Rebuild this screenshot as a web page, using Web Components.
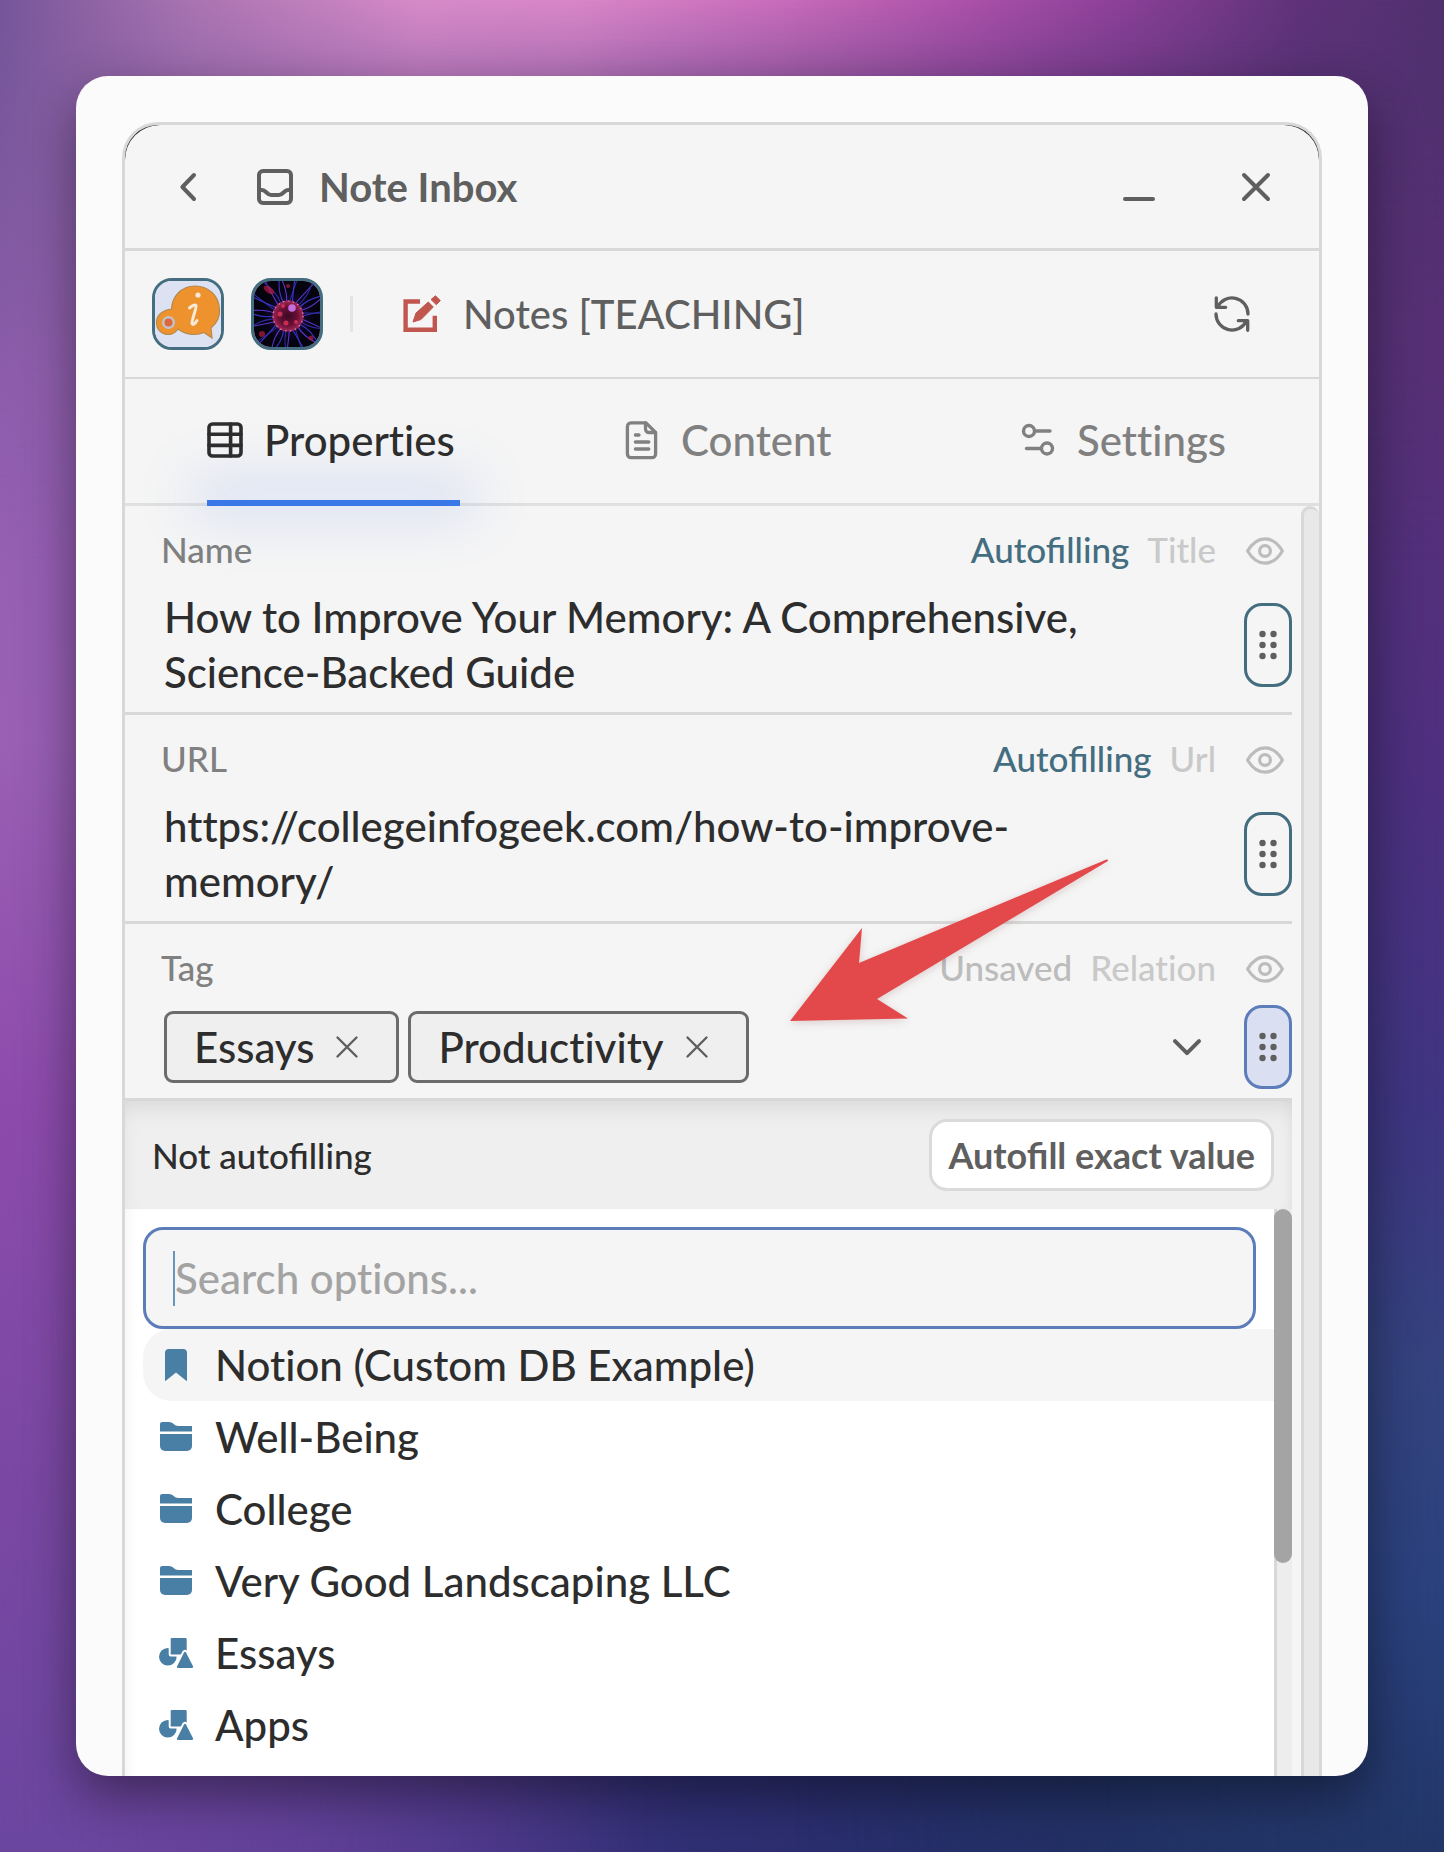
<!DOCTYPE html>
<html lang="en">
<head>
<meta charset="utf-8">
<title>Note Inbox</title>
<style>
  html, body { margin: 0; }
  body {
    font-family: Lato, "Liberation Sans", sans-serif;
    font-weight: 500;
    font-variant-ligatures: no-common-ligatures;
    --text-lg: 42px;
    --text-md: 40px;
    --text-sm: 35px;
    --ink: #2d2d2d;
    --ink-mid: #5f5f5f;
    --ink-soft: #808080;
    --ink-mute: #bcbcbc;
    --ink-faint: #c9c9c9;
    --surface: #f5f5f5;
    --line: #d8d8d8;
    --teal: #446d80;
    --blue: #5c7db9;
    --icon-blue: #4a7fa5;
    color: var(--ink);
  }
</style>
</head>
<body>
<desktop-backdrop>
  <note-window></note-window>
</desktop-backdrop>

<script>
const BASE = `
  :host, *, *::before, *::after { box-sizing: border-box; }
  button, input, textarea { font: inherit; font-variant-ligatures: inherit; color: inherit; background: none; border: 0; margin: 0; padding: 0; border-radius: 0; outline: 0; }
  button { cursor: pointer; display: flex; align-items: center; justify-content: center; }
`;

function define(name, css, html) {
  const template = document.createElement('template');
  template.innerHTML = `<style>${BASE}${css}</style>${html}`;
  customElements.define(name, class extends HTMLElement {
    constructor() {
      super();
      this.attachShadow({ mode: 'open' }).append(template.content.cloneNode(true));
    }
  });
}

/* ---------- icons ---------- */
const stroke = (w, body) => `<g fill="none" stroke="currentColor" stroke-width="${w}" stroke-linecap="round" stroke-linejoin="round">${body}</g>`;
const ICONS = {
  back: [16, 28, stroke(4, '<path d="M14 2 2.4 14 14 26"/>')],
  inbox: [36, 36, stroke(4, '<rect x="2" y="2" width="32" height="32" rx="4"/><path d="M2 21h3c4 0 5 5 9 5h8c4 0 5-5 9-5h3"/>')],
  minimize: [32, 28, stroke(4, '<path d="M2 26h28"/>')],
  close: [28, 28, stroke(4, '<path d="M2 2l24 24M26 2 2 26"/>')],
  edit: [38, 38, '<g stroke="currentColor" stroke-width="1" stroke-linejoin="round"><path fill="none" stroke-width="4.4" stroke-linejoin="miter" d="M17 6.5H2.6v28.3h29.2V20.7"/><path fill="currentColor" d="M10 27l3-9L25.3 7l5 5L18 24.5z"/><path fill="currentColor" d="M28 4.5 32.5.8l4.8 4.8-4 4.1z"/></g>'],
  refresh: [36, 36, stroke(3.3, '<path d="M2.3 1.8v9.5h9.4M3.6 11A16 16 0 0 1 34 18M33.7 34.3v-9.6h-9.4M32.4 25A16 16 0 0 1 2 18"/>')],
  table: [36, 36, stroke(3.6, '<rect x="2" y="2" width="32" height="32" rx="3.5"/><path d="M2 12.2h32M2 23.4h32M23.6 2v32"/>')],
  file: [36, 38, stroke(3.3, '<path d="M7 1.8h15l9.6 9.6V33a3.6 3.6 0 0 1-3.6 3.6H7A3.6 3.6 0 0 1 3.4 33V5.4A3.6 3.6 0 0 1 7 1.8z"/><path d="M21.5 2v6a3.5 3.5 0 0 0 3.5 3.5h6.5M11.4 14h3.6M11.4 21h13.4M11.4 28h13.4"/>')],
  sliders: [36, 34, stroke(3.4, '<circle cx="9" cy="8" r="5.5"/><path d="M15 8h15M6.5 25.5H21"/><circle cx="27" cy="25.5" r="5.5"/>')],
  eye: [38, 28, stroke(3.2, '<path d="M1.6 14C6.5 5.6 12 1.8 19 1.8S31.5 5.6 36.4 14C31.5 22.4 26 26.2 19 26.2S6.5 22.4 1.6 14z"/><circle cx="19" cy="14" r="5.4"/>')],
  dots: [18, 28, '<g fill="currentColor"><circle cx="3.5" cy="3" r="3.2"/><circle cx="14.5" cy="3" r="3.2"/><circle cx="3.5" cy="14" r="3.2"/><circle cx="14.5" cy="14" r="3.2"/><circle cx="3.5" cy="25" r="3.2"/><circle cx="14.5" cy="25" r="3.2"/></g>'],
  remove: [22, 22, stroke(2.4, '<path d="M1.5 1.5l19 19M20.5 1.5l-19 19"/>')],
  chevron: [28, 17, stroke(4, '<path d="M2 2.2l12 12 12-12"/>')],
  bookmark: [34, 32, '<path fill="currentColor" d="M10 0h14a4 4 0 0 1 4 4v27.5q0 .8-.8.3L17 23.6l-10.200 8.2q-.8.5-.8-.3V4a4 4 0 0 1 4-4z"/>'],
  folder: [34, 30, '<path fill="currentColor" d="M1 2a2 2 0 0 1 2-2h7c4.5 0 5 4 9.5 4H33v5.500H1z"/><path fill="currentColor" d="M1 12h32v12a5 5 0 0 1-5 5H6a5 5 0 0 1-5-5z"/>'],
  shapes: [34, 30, '<g fill="currentColor" stroke="#fff" stroke-width="4" paint-order="stroke" stroke-linejoin="round"><circle cx="8.8" cy="18.7" r="8.8" stroke="none"/><path d="M11.7 1a1 1 0 0 1 1-1h14a1 1 0 0 1 1 1v15.500h-16z"/><path d="M25 14.600q1-1.600 2 0L34 28.200q.7 1.800-1.200 1.800H19q-1.800 0-.9-1.800z"/></g>'],
  info: [66, 66, `<rect width="66" height="66" fill="#dde2f3"/>
    <g fill="#ee922d" stroke="#b4894f" stroke-width="1.2"><path d="M40 5C26 5 17 16 16.500 28 8 29 1.500 34 1.500 41.500S7 53.500 13.500 53.500c5 0 7-2 9.500-5.500 6 5 17 7.500 26 3.500L57 57l-1-10C62 42 65 36 64.500 28.500 64 15 54 5 40 5z"/></g>
    <circle cx="13.500" cy="41.500" r="6.500" fill="#bfc3cf"/><circle cx="13.500" cy="41.500" r="4" fill="#e0673a"/>
    <circle cx="43" cy="14" r="2.600" fill="#f7ead9"/>
    <path d="M34.500 27q5-4 6.500-2.500c1 1.500-4.500 15-4 18 .5 2 3 .5 5-3" fill="none" stroke="#f7ead9" stroke-width="3" stroke-linecap="round"/>`],
  plasma: [66, 66, null],
};

function plasma() {
  let rays = '';
  for (let i = 0; i < 30; i++) {
    const a = i * Math.PI / 15, b = a + (i % 2 ? .16 : -.14), m = a + (i % 3 ? .1 : -.12);
    const p = (r, t) => `${(34 + r * Math.cos(t)).toFixed(1)} ${(35 + r * Math.sin(t)).toFixed(1)}`;
    rays += `<path d="M${p(14, a)}Q${p(28, m)} ${p(47, b)}" stroke="${['#3b35c8', '#5a35d0', '#2e2a9a'][i % 3]}"/>`;
  }
  return `<radialGradient id="core"><stop offset="0" stop-color="#3a0a24"/><stop offset=".6" stop-color="#6a1034"/><stop offset="1" stop-color="#a02a5a"/></radialGradient>
    <radialGradient id="halo"><stop offset="0" stop-color="#6b2db8" stop-opacity=".6"/><stop offset="1" stop-color="#1a0a50" stop-opacity="0"/></radialGradient>
    <rect width="66" height="66" fill="#04030e"/><circle cx="34" cy="35" r="28" fill="url(#halo)"/>
    <g fill="none" stroke-width="1.1">${rays}</g>
    <g fill="#b81c44" opacity=".7"><ellipse cx="15" cy="9" rx="6" ry="3" transform="rotate(35 15 9)"/><circle cx="34" cy="5" r="2"/><circle cx="8" cy="53" r="3"/><circle cx="57" cy="57" r="2.500"/></g>
    <circle cx="34" cy="35" r="15.500" fill="url(#core)"/>
    <circle cx="34" cy="35" r="15" fill="none" stroke="#f07aa0" stroke-width="1.200" stroke-dasharray="1.500 3.500"/>
    <g fill="#c92d55"><circle cx="26" cy="33" r="2.500"/><circle cx="32" cy="42" r="2.500"/><circle cx="42" cy="41" r="2"/><circle cx="29" cy="25" r="2"/></g>
    <circle cx="38" cy="27" r="3.800" fill="#c46fe0"/>`;
}
ICONS.plasma[2] = plasma();

customElements.define('ui-icon', class extends HTMLElement {
  connectedCallback() {
    if (this.shadowRoot) return;
    const [w, h, body] = ICONS[this.getAttribute('name')];
    this.attachShadow({ mode: 'open' }).innerHTML =
      `<style>:host{display:block;flex:none;width:${w}px;height:${h}px}svg{display:block;overflow:visible}</style>
       <svg width="${w}" height="${h}" viewBox="0 0 ${w} ${h}" aria-hidden="true">${body}</svg>`;
  }
});

/* ---------- page ---------- */
define('desktop-backdrop', `
  :host {
    display: flex; height: 100vh; padding: 76px; overflow: hidden; position: relative; z-index: 0;
    background: linear-gradient(90deg, #6b469f 0%, #4b3788 28%, #2f2f74 48%, #222c62 76%, #223667 100%);
  }
  .glow { position: absolute; inset: 0; z-index: -1; }
  .left { background: linear-gradient(#7a5a9a 0%, #9460b0 20%, #9a60b4 40%, #8d4bab 60%, #7a48a2 80%, #6b469f 100%);
    mask-image: linear-gradient(90deg, #000 0, transparent 45%); }
  .right { background: linear-gradient(#50306f 0%, #5b3077 18%, #4f2f80 42%, #403582 60%, #34437f 74%, #2b417e 86%, #223667 100%);
    mask-image: linear-gradient(270deg, #000 0, transparent 45%); }
  .top { background: linear-gradient(90deg, #76559a 0%, #a873b0 13%, #d68ac8 29%, #d986c8 40%, #c86cba 54%, #a94fa8 68%, #8a4096 78%, #5f3279 90%, #50306f 100%);
    mask-image: linear-gradient(#000 0, #000a 90px, transparent 560px); }
  ::slotted(*) { flex: 1; min-width: 0; }
`, `<div class="glow left"></div><div class="glow right"></div><div class="glow top"></div><slot></slot>`);

define('note-window', `
  :host {
    display: flex; padding: 46px 46px 0; overflow: hidden; border-radius: 32px; background: #fbfbfb;
    box-shadow: 0 20px 50px rgba(0, 0, 0, .42);
  }
  .panel {
    flex: 1; min-width: 0; display: flex; flex-direction: column; overflow: hidden;
    border: 3px solid var(--line); border-bottom: 0; border-radius: 36px 36px 0 0; background: var(--surface);
  }
  window-header, database-bar, tab-bar, text-property, tag-property { flex: none; }
  .scroll { flex: 1; min-height: 0; display: flex; gap: 9px; }
  .fields { flex: 1; min-width: 0; display: flex; flex-direction: column; }
  .track { width: 18px; border-left: 3px solid var(--line); border-top: 3px solid var(--line); border-radius: 9px 9px 0 0; background: #e8e8e8; }
  relation-picker { flex: 1; min-height: 0; }
`, `
  <div class="panel">
    <window-header></window-header>
    <database-bar></database-bar>
    <tab-bar></tab-bar>
    <div class="scroll">
      <div class="fields">
        <text-property label="Name" kind="Title" value="How to Improve Your Memory: A Comprehensive, Science-Backed Guide"></text-property>
        <text-property label="URL" kind="Url" value="https://collegeinfogeek.com/how-to-improve-memory/"></text-property>
        <tag-property></tag-property>
        <relation-picker></relation-picker>
      </div>
      <div class="track"></div>
    </div>
  </div>`);

define('window-header', `
  :host { display: block; background: #222; }
  header {
    display: flex; align-items: center; height: 126px; padding: 0 49px 0 55px;
    border-bottom: 3px solid var(--line); border-radius: 35px 35px 0 0; background: var(--surface); color: var(--ink-mid);
  }
  h1 { flex: 1; display: flex; align-items: center; gap: 26px; margin: 0 0 0 61px; font-size: var(--text-md); font-weight: 700; line-height: 48px; }
  .min { margin-right: 87px; }
`, `
  <header>
    <button aria-label="Back"><ui-icon name="back"></ui-icon></button>
    <h1><ui-icon name="inbox"></ui-icon><span>Note Inbox</span></h1>
    <button class="min" aria-label="Minimize"><ui-icon name="minimize"></ui-icon></button>
    <button aria-label="Close"><ui-icon name="close"></ui-icon></button>
  </header>`);

define('database-bar', `
  :host { display: flex; align-items: center; height: 128px; padding: 0 69px 0 27px; border-bottom: 2px solid var(--line); color: var(--ink-mid); }
  .app { width: 72px; height: 72px; margin-right: 27px; overflow: hidden; border: 3px solid var(--teal); border-radius: 20px; }
  .rule { width: 3px; height: 36px; background: #e4e4e4; }
  .edit { margin: 0 22px 0 50px; color: #c1564f; }
  .name { flex: 1; font-size: var(--text-md); line-height: 48px; }
`, `
  <button class="app" aria-label="Info"><ui-icon name="info"></ui-icon></button>
  <button class="app" aria-label="Plasma"><ui-icon name="plasma"></ui-icon></button>
  <span class="rule"></span>
  <ui-icon class="edit" name="edit"></ui-icon>
  <span class="name">Notes [TEACHING]</span>
  <button aria-label="Refresh"><ui-icon name="refresh"></ui-icon></button>`);

define('tab-bar', `
  :host {
    display: grid; grid-template-columns: 417fr 396fr 299fr; justify-items: start; height: 127px; padding-left: 82px;
    border-bottom: 3px solid #e0e0e0; position: relative; z-index: 1; font-size: var(--text-lg); line-height: 50px; color: var(--ink-soft);
  }
  button { height: 127px; gap: 21px; padding-right: 5px; border-bottom: 6px solid transparent; }
  button[aria-selected="true"] { color: var(--ink); border-color: #3b78e7; position: relative; }
  button[aria-selected="true"]::before {
    content: ""; position: absolute; z-index: -1; inset: auto 0 -6px; height: 6px; box-shadow: 0 -6px 56px 16px rgba(90, 130, 235, .2);
  }
`, `
  <button role="tab" aria-selected="true"><ui-icon name="table"></ui-icon><span>Properties</span></button>
  <button role="tab" aria-selected="false"><ui-icon name="file"></ui-icon><span>Content</span></button>
  <button role="tab" aria-selected="false"><ui-icon name="sliders"></ui-icon><span>Settings</span></button>`);

/* ---------- property rows ---------- */
define('property-row', `
  :host { display: block; border-bottom: 3px solid var(--line); }
  .meta { display: flex; align-items: center; height: 66px; padding: 20px 8px 0 36px; font-size: var(--text-sm); line-height: 42px; color: var(--ink-faint); }
  .label { flex: 1; color: var(--ink-soft); }
  .status { margin-right: 18px; }
  .kind { margin-right: 30px; }
  .eye { height: 42px; padding-top: 4px; color: var(--ink-mute); }
  .body { display: flex; align-items: center; padding: 15px 0 9px 39px; }
  .value { flex: 1; min-width: 0; }
  .grip { width: 48px; height: 84px; border: 3px solid var(--grip-line, var(--teal)); border-radius: 18px; background: var(--grip-fill, transparent); color: var(--ink-mid); }
`, `
  <div class="meta">
    <span class="label"><slot name="label"></slot></span>
    <span class="status"><slot name="status"></slot></span>
    <span class="kind"><slot name="kind"></slot></span>
    <button class="eye" aria-label="Toggle visibility"><ui-icon name="eye"></ui-icon></button>
  </div>
  <div class="body">
    <div class="value"><slot></slot></div>
    <button class="grip" aria-label="Property options"><ui-icon name="dots"></ui-icon></button>
  </div>`);

customElements.define('text-property', class extends HTMLElement {
  connectedCallback() {
    if (this.shadowRoot) return;
    const get = n => this.getAttribute(n);
    this.attachShadow({ mode: 'open' }).innerHTML = `<style>${BASE}
      :host { display: block; }
      .status { color: var(--teal); font-variant-ligatures: normal; }
      textarea { display: block; width: 100%; height: 116px; padding: 3px 90px 3px 0; resize: none; overflow: hidden; font-size: var(--text-lg); line-height: 55px; color: var(--ink); }
      </style>
      <property-row>
        <label slot="label" for="value">${get('label')}</label>
        <span slot="status" class="status">Autofilling</span>
        <span slot="kind">${get('kind')}</span>
        <textarea id="value" rows="2" spellcheck="false">${get('value')}</textarea>
      </property-row>`;
  }
});

define('tag-chip', `
  :host { display: flex; align-items: center; gap: 22px; height: 72px; padding: 0 38px 0 27px; border: 3px solid #6b6b6b; border-radius: 9px; background: #efefef; font-size: var(--text-lg); line-height: 50px; }
  button { color: var(--ink-mid); }
`, `<slot></slot><button aria-label="Remove"><ui-icon name="remove"></ui-icon></button>`);

define('tag-property', `
  :host { display: block; }
  property-row { --grip-line: var(--blue); --grip-fill: #dae0f2; }
  .status { color: var(--ink-mute); }
  .chips { display: flex; align-items: center; gap: 9px; }
  .open { margin: 0 43px 0 auto; color: var(--ink-mid); }
`, `
  <property-row>
    <span slot="label" id="tag-label">Tag</span>
    <span slot="status" class="status">Unsaved</span>
    <span slot="kind">Relation</span>
    <div class="chips" role="group" aria-labelledby="tag-label">
      <tag-chip>Essays</tag-chip>
      <tag-chip>Productivity</tag-chip>
      <button class="open" aria-label="Open options"><ui-icon name="chevron"></ui-icon></button>
    </div>
  </property-row>
  <callout-arrow></callout-arrow>`);

/* Pointer drawn over the rows, aimed at the chips. */
define('callout-arrow', `
  :host { position: absolute; left: 780px; top: 850px; pointer-events: none; z-index: 2; }
  svg { display: block; overflow: visible; filter: drop-shadow(0 2px 4px rgba(120, 40, 40, .2)); }
`, `<svg width="340" height="180" viewBox="0 0 340 180" aria-hidden="true"><path fill="#e3484b" d="M10 171 82 78l-3 35L326.5 9.500q2.500 0 1 1.700L97 149l31 19.500z"/></svg>`);

/* ---------- picker ---------- */
define('option-row', `
  :host { display: block; }
  button { width: 100%; height: 72px; justify-content: flex-start; gap: 22px; padding-left: 16px; border-radius: 28px 0 0 28px; font-size: var(--text-lg); line-height: 50px; }
  :host([active]) button { background: var(--surface); }
  ::slotted(ui-icon) { color: var(--icon-blue); }
`, `<button role="option"><slot name="icon"></slot><span><slot></slot></span></button>`);

define('relation-picker', `
  :host { display: flex; flex-direction: column; }
  .bar {
    display: flex; align-items: center; justify-content: space-between; flex: none; height: 108px; padding: 0 18px 0 27px; font-variant-ligatures: normal;
    background: #efefef; box-shadow: inset 0 14px 26px -10px rgba(0, 0, 0, .11), inset -6px 0 14px -8px rgba(0, 0, 0, .06); font-size: var(--text-sm); line-height: 42px;
  }
  .exact { height: 72px; padding: 0 16px; border: 3px solid #dadada; border-radius: 18px; background: #fff; color: var(--ink-mid); font-size: 36px; font-weight: 700; }
  .list { flex: 1; min-height: 0; display: flex; background: #fff; box-shadow: inset 12px 0 14px -10px rgba(0, 0, 0, .05); }
  .options { flex: 1; min-width: 0; padding: 18px 0 0 18px; overflow: hidden; }
  .search {
    display: flex; align-items: center; height: 102px; margin-right: 18px; padding: 0 27px; border: 3px solid var(--blue); border-radius: 20px;
    background: var(--surface); font-size: var(--text-lg);
  }
  .caret { flex: none; width: 2px; height: 55px; background: #6795bd; }
  input { flex: 1; min-width: 0; height: 55px; line-height: 55px; }
  input::placeholder { color: #a3a3a3; opacity: 1; }
  .track { width: 18px; border-left: 3px solid var(--line); background: #ededed; }
  .thumb { width: 18px; height: 354px; margin-left: -3px; border-radius: 9px; background: #a4a4a4; }
`, `
  <div class="bar"><span>Not autofilling</span><button class="exact">Autofill exact value</button></div>
  <div class="list">
    <div class="options">
      <div class="search"><span class="caret"></span><input type="text" placeholder="Search options..." aria-label="Search options"></div>
      <div role="listbox">
        <option-row active><ui-icon slot="icon" name="bookmark"></ui-icon>Notion (Custom DB Example)</option-row>
        <option-row><ui-icon slot="icon" name="folder"></ui-icon>Well-Being</option-row>
        <option-row><ui-icon slot="icon" name="folder"></ui-icon>College</option-row>
        <option-row><ui-icon slot="icon" name="folder"></ui-icon>Very Good Landscaping LLC</option-row>
        <option-row><ui-icon slot="icon" name="shapes"></ui-icon>Essays</option-row>
        <option-row><ui-icon slot="icon" name="shapes"></ui-icon>Apps</option-row>
      </div>
    </div>
    <div class="track"><div class="thumb"></div></div>
  </div>`);
</script>
</body>
</html>
